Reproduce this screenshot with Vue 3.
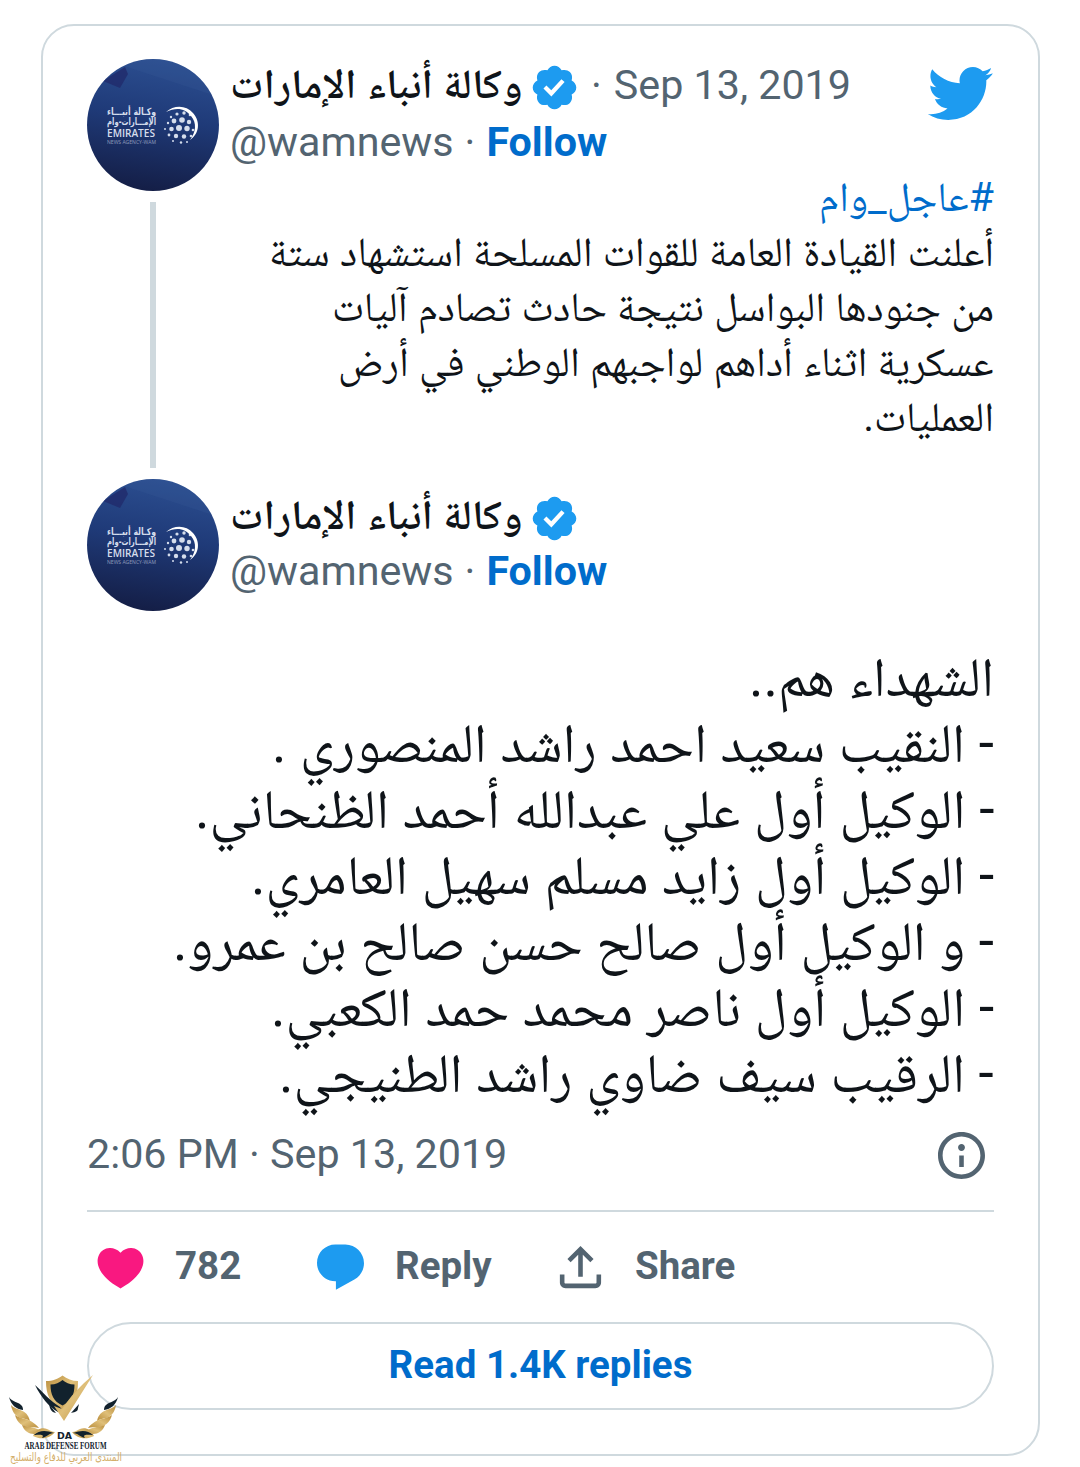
<script setup>
// Squeezes or stretches a line of text to a given width
const vFit = {
  mounted(el, { value }) {
    el.style.transform = `scaleX(${value / el.offsetWidth})`
  }
}

const name = 'وكالة أنباء الإمارات'

const parentLines = [
  { text: 'أعلنت القيادة العامة للقوات المسلحة استشهاد ستة', width: 725 },
  { text: 'من جنودها البواسل نتيجة حادث تصادم آليات', width: 662 },
  { text: 'عسكرية اثناء أداهم لواجبهم الوطني في أرض', width: 656 },
  { text: 'العمليات.', width: 131 }
]

const mainLines = [
  { text: 'الشهداء هم..', width: 245 },
  { text: '- النقيب سعيد احمد راشد المنصوري .', width: 722 },
  { text: '- الوكيل أول علي عبدالله أحمد الظنحاني.', width: 799 },
  { text: '- الوكيل أول زايد مسلم سهيل العامري.', width: 743 },
  { text: '- و الوكيل أول صالح حسن صالح بن عمرو.', width: 821 },
  { text: '- الوكيل أول ناصر محمد حمد الكعبي.', width: 723 },
  { text: '- الرقيب سيف ضاوي راشد الطنيجي.', width: 715 }
]

const tweets = [
  { id: 1, date: 'Sep 13, 2019' },
  { id: 2, date: '' }
]

// Dots of the globe in the agency logo
const dots = [
  [84, 58, 1.2], [90, 55, 1.6], [97, 54, 1.7], [103, 56, 1.3],
  [81, 64, 1.2], [87, 62, 2.4], [95, 61, 2.8], [102, 63, 2.2],
  [78, 70, 1], [84.5, 70, 2.3], [92, 69, 3], [100, 69.5, 2.7], [106, 71, 1.3],
  [82, 76, 1.4], [89, 77, 2.2], [97, 77.5, 2.2], [104, 77, 1.3],
  [86, 82, 1], [94, 83.5, 1.2], [100, 83, 1]
]
</script>

<template>
  <main class="page">
    <article class="card">
      <section v-for="t in tweets" :key="t.id" class="tweet" :class="'tweet-' + t.id">
        <header class="head">
          <svg class="avatar" viewBox="0 0 132 132">
            <defs>
              <linearGradient :id="'sky' + t.id" x1=".6" y1="0" x2=".45" y2="1">
                <stop offset="0" stop-color="#2c4f91" />
                <stop offset=".45" stop-color="#1f3a78" />
                <stop offset="1" stop-color="#141e46" />
              </linearGradient>
              <clipPath :id="'round' + t.id"><circle cx="66" cy="66" r="66" /></clipPath>
            </defs>
            <g :clip-path="`url(#round${t.id})`">
              <rect width="132" height="132" :fill="`url(#sky${t.id})`" />
              <path d="M16 22 38 8l3 7-8 14z" fill="#202b6b" opacity=".8" />
              <path d="M40 8 132 38V0H30z" fill="#3b5e9c" opacity=".2" />
            </g>
            <g fill="#d5ddec">
              <text class="logo-ar" x="20" y="56" textLength="49" lengthAdjust="spacingAndGlyphs">وكـالة أنبـــاء</text>
              <text class="logo-ar" x="20" y="66" textLength="49" lengthAdjust="spacingAndGlyphs">الإمـــارات-وام</text>
              <text class="logo-en" x="20" y="77.5" textLength="48" lengthAdjust="spacingAndGlyphs">EMIRATES</text>
              <text class="logo-sub" x="20" y="85" textLength="49" lengthAdjust="spacingAndGlyphs">NEWS AGENCY-WAM</text>
              <circle v-for="(d, i) in dots" :key="i" :cx="d[0]" :cy="d[1]" :r="d[2]" />
              <path d="M79 53C87 46 99 46 106 54c8 9 6 21-3 27 6-8 7-17 1-24-6-8-15-9-25-4z" fill="#fff" />
            </g>
          </svg>
          <div class="who">
            <div class="row">
              <span class="name"><span v-fit="293" class="fit left">{{ name }}</span></span>
              <svg class="verified" viewBox="0 0 24 24">
                <path d="M22.25 12c0-1.43-.88-2.67-2.19-3.34.46-1.39.2-2.9-.81-3.91s-2.52-1.27-3.91-.81c-.66-1.31-1.91-2.19-3.34-2.19s-2.67.88-3.33 2.19c-1.4-.46-2.91-.2-3.92.81s-1.26 2.52-.8 3.91c-1.31.67-2.2 1.91-2.2 3.34s.89 2.67 2.2 3.34c-.46 1.39-.21 2.9.8 3.91s2.52 1.26 3.91.81c.67 1.31 1.91 2.19 3.34 2.19s2.68-.88 3.34-2.19c1.39.45 2.9.2 3.91-.81s1.27-2.52.81-3.91c1.31-.67 2.19-1.91 2.19-3.34zm-11.71 4.2L6.8 12.46l1.41-1.42 2.26 2.26 4.8-5.23 1.47 1.36-6.2 6.77z" />
              </svg>
              <span v-if="t.date" class="date"><i>·</i>{{ t.date }}</span>
            </div>
            <div class="row handle">
              <span>@wamnews</span><i>·</i><a class="follow">Follow</a>
            </div>
          </div>
          <svg v-if="t.date" class="bird" viewBox="0 0 24 24">
            <path d="M23.643 4.937c-.835.37-1.732.62-2.675.733.962-.576 1.7-1.49 2.048-2.578-.9.534-1.897.922-2.958 1.13-.85-.904-2.06-1.47-3.4-1.47-2.572 0-4.658 2.086-4.658 4.66 0 .364.042.718.12 1.06-3.873-.195-7.304-2.05-9.602-4.868-.4.69-.63 1.49-.63 2.342 0 1.616.823 3.043 2.072 3.878-.764-.025-1.482-.234-2.11-.583v.06c0 2.257 1.605 4.14 3.737 4.568-.392.106-.803.162-1.227.162-.3 0-.593-.028-.877-.082.593 1.85 2.313 3.198 4.352 3.234-1.595 1.25-3.604 1.995-5.786 1.995-.376 0-.747-.022-1.112-.065 2.062 1.323 4.51 2.093 7.14 2.093 8.57 0 13.255-7.098 13.255-13.254 0-.2-.005-.402-.014-.602.91-.658 1.7-1.477 2.323-2.41z" />
          </svg>
        </header>

        <div v-if="t.id === 1" class="thread">
          <div class="thread-line"></div>
          <div class="text small" dir="rtl">
            <p><a v-fit="175" class="fit hashtag">#عاجل_وام</a></p>
            <p v-for="l in parentLines" :key="l.text"><span v-fit="l.width" class="fit">{{ l.text }}</span></p>
          </div>
        </div>
        <div v-else class="text large" dir="rtl">
          <p v-for="l in mainLines" :key="l.text"><span v-fit="l.width" class="fit">{{ l.text }}</span></p>
        </div>
      </section>

      <div class="meta">
        <span>2:06 PM · Sep 13, 2019</span>
        <svg class="icon info" viewBox="0 0 24 24">
          <path d="M13.5 8.5c0 .83-.67 1.5-1.5 1.5s-1.5-.67-1.5-1.5S11.17 7 12 7s1.5.67 1.5 1.5zM13 17v-5h-2v5h2zm-1 5.25c5.66 0 10.25-4.59 10.25-10.25S17.66 1.75 12 1.75 1.75 6.34 1.75 12 6.34 22.25 12 22.25zM20.25 12c0 4.56-3.69 8.25-8.25 8.25S3.75 16.56 3.75 12 7.44 3.75 12 3.75s8.25 3.69 8.25 8.25z" />
        </svg>
      </div>

      <div class="actions">
        <span class="action like">
          <svg class="icon pink" viewBox="0 0 24 24">
            <path d="M20.884 13.19c-1.351 2.48-4.001 5.12-8.379 7.67l-.503.3-.504-.3c-4.379-2.55-7.029-5.19-8.382-7.67-1.36-2.5-1.41-4.86-.514-6.67.887-1.79 2.647-2.91 4.601-3.01 1.651-.09 3.368.56 4.798 2.01 1.429-1.45 3.146-2.1 4.796-2.01 1.954.1 3.714 1.22 4.601 3.01.896 1.81.846 4.17-.514 6.67z" />
          </svg><b>782</b>
        </span>
        <span class="action reply">
          <svg class="icon blue" viewBox="0 0 24 24">
            <path d="M1.751 10c0-4.42 3.584-8 8.005-8h4.366c4.49 0 8.129 3.64 8.129 8.13 0 2.96-1.607 5.68-4.196 7.11l-8.054 4.46v-3.69h-.067c-4.49.1-8.183-3.51-8.183-8.01z" />
          </svg><b>Reply</b>
        </span>
        <span class="action">
          <svg class="icon" viewBox="0 0 24 24">
            <path d="M12 2.59l5.7 5.7-1.41 1.42L13 6.41V16h-2V6.41l-3.3 3.3-1.41-1.42L12 2.59zM21 15l-.02 3.51c0 1.38-1.12 2.49-2.5 2.49H5.5C4.11 21 3 19.88 3 18.5V15h2v3.5c0 .28.22.5.5.5h12.98c.28 0 .5-.22.5-.5L19 15h2z" />
          </svg><b>Share</b>
        </span>
      </div>

      <a class="more">Read 1.4K replies</a>
    </article>

    <svg class="watermark" viewBox="0 0 140 107">
      <defs>
        <linearGradient id="gold" x1="0" y1="0" x2="1" y2="1">
          <stop offset="0" stop-color="#b98d3c" />
          <stop offset=".5" stop-color="#dfbf79" />
          <stop offset="1" stop-color="#b98d3c" />
        </linearGradient>
        <g id="wing">
          <path d="M9 37c3 5 10 5 13 9 1 2 1 3 1 4-7-1-12-5-14-13z" fill="#12222d" />
          <path d="M11 45c5 6 16 3 19 16-3-2-5-2-9-3-5-1-9-6-10-13z" fill="url(#gold)" />
          <path d="M15 55c6 5 15 2 24 13-4-1-6-1-10-1-6 0-12-4-14-12z" fill="url(#gold)" />
          <path d="M22 65c8 3 14 1 21 8-3 0-6 1-9 1-5 0-10-3-12-9z" fill="url(#gold)" />
          <path d="M33 76c3-7 9-9 14-7 3 1 5 3 8 3-4 5-12 9-22 4z" fill="url(#gold)" />
          <path d="M34 75c5-5 12-5 20-2-5 0-7 4-12 5 2-3 1-4-8-3z" fill="#12222d" />
        </g>
      </defs>
      <use href="#wing" />
      <use href="#wing" transform="translate(127 0) scale(-1 1)" />
      <path d="M46 21c7 0 12-2 16.5-5.500C67 19 72 21 78 21c0 14-3 23-15.500 29C50 44 46 35 46 21z" fill="url(#gold)" />
      <path d="M50.500 24.500c5 0 9-2 12-4.500 3 2.500 7 4.500 12 4.500 0 10-3 17-12 21-9-4-12-11-12-21z" fill="#12222d" />
      <path d="M35 25c8 7 15 16 25 22l3 4-5 1c-9-5-17-15-23-27z" fill="#12222d" />
      <path d="m54 46 8 3c8-12 18-23 31-34L64 61z" fill="url(#gold)" />
      <path d="m49 44 7 9c-5-1-6-4-7-9zM79 44l-8 9c5-1 7-2 7-5z" fill="#12222d" />
      <text class="wm-da" x="57" y="78.5" textLength="15" lengthAdjust="spacingAndGlyphs">DA</text>
      <text class="wm-en" x="24.5" y="88.5" textLength="82" lengthAdjust="spacingAndGlyphs">ARAB DEFENSE FORUM</text>
      <text class="wm-ar" x="10" y="101" textLength="112" lengthAdjust="spacingAndGlyphs">المنتدى العربي للدفاع والتسليح</text>
    </svg>
  </main>
</template>

<style>
body {
  background: #fff;
}
</style>

<style scoped>
.page {
  position: relative;
  box-sizing: border-box;
  width: 1080px;
  height: 1467px;
  padding: 24px 40px 0 41px;
  font-family: Roboto, "Noto Naskh Arabic", "Noto Naskh Arabic UI", "DejaVu Sans", sans-serif;
  font-size: 41.25px;
  color: #0f1419;
}

.card {
  box-sizing: border-box;
  height: 1432px;
  padding: 33px 44px 0;
  border: 2px solid #cfd9de;
  border-radius: 33px;
}

.tweet-1 {
  height: 420px;
}

.tweet-2 {
  height: 639px;
}

.head {
  display: flex;
  height: 132px;
}

.avatar {
  flex: none;
  width: 132px;
  height: 132px;
  margin-right: 12px;
}

.logo-ar {
  font: 700 10px "DejaVu Sans", sans-serif;
}

.logo-en {
  font: 600 11px "Open Sans", sans-serif;
}

.logo-sub {
  font: 5.5px "Open Sans", sans-serif;
  opacity: 0.6;
}

.who {
  flex: 1;
  margin-top: -3px;
}

.row {
  display: flex;
  align-items: center;
  height: 57px;
  white-space: nowrap;
}

.tweet-2 .row {
  height: 55px;
}

.tweet-2 .who {
  padding-top: 12px;
}

.name {
  display: flex;
  width: 292px;
  margin-left: -1px;
  font-weight: 600;
  line-height: 57px;
}

.fit {
  display: inline-block;
  white-space: nowrap;
  transform-origin: right center;
}

.fit.left {
  transform-origin: left center;
}

.verified {
  width: 51px;
  height: 51px;
  margin: 5px 0 0 7px;
  fill: #1d9bf0;
}

.date,
.handle {
  color: #536471;
}

.date,
.handle {
  margin-left: -1px;
}

i {
  font-style: normal;
  margin: 0 12px;
}

.handle i {
  margin: 0 11px 0 11px;
}

.follow {
  color: #006ccb;
  font-weight: 700;
}

.bird {
  width: 69px;
  height: 69px;
  fill: #1d9bf0;
}

.thread {
  display: flex;
  height: 288px;
}

.thread-line {
  width: 6px;
  height: 266px;
  margin: 11px 0 0 63px;
  background: #cfd9de;
}

.text {
  flex: 1;
}

.text p {
  margin: 0;
  white-space: nowrap;
}

.small {
  margin-top: -21px;
}

.small p {
  height: 55px;
  line-height: 55px;
}

.hashtag {
  color: #006ccb;
}

.large {
  padding-top: 33px;
}

.large p {
  height: 66px;
  line-height: 66px;
  font-size: 55px;
}

.meta {
  display: flex;
  align-items: center;
  justify-content: space-between;
  box-sizing: border-box;
  height: 94px;
  padding-bottom: 18px;
  border-bottom: 2px solid #cfd9de;
  color: #536471;
}

.meta span {
  padding-bottom: 2px;
}

.icon {
  width: 55px;
  height: 55px;
  fill: #536471;
}

.info {
  margin-right: 5px;
}

.actions {
  display: flex;
  align-items: center;
  height: 110px;
  padding-left: 6px;
  color: #536471;
  font-size: 38.5px;
}

.action {
  display: flex;
  align-items: center;
  gap: 27px;
}

.action b {
  padding-bottom: 4px;
}

.like {
  width: 220px;
}

.reply {
  width: 240px;
}

.icon.pink {
  fill: #f91880;
}

.icon.blue {
  fill: #1d9bf0;
}

.more {
  display: flex;
  align-items: center;
  justify-content: center;
  box-sizing: border-box;
  height: 88px;
  padding-bottom: 4px;
  border: 2px solid #cfd9de;
  border-radius: 44px;
  color: #006ccb;
  font-size: 38.5px;
  font-weight: 700;
}

.watermark {
  position: absolute;
  left: 0;
  bottom: 0;
  width: 140px;
  height: 107px;
}

.wm-da {
  font: 700 9.5px "DejaVu Sans", sans-serif;
  fill: #12222d;
}

.wm-en {
  font: 700 10px "Liberation Serif", serif;
  fill: #12222d;
}

.wm-ar {
  font: 11.5px "DejaVu Sans", sans-serif;
  fill: #d3ae69;
}
</style>
